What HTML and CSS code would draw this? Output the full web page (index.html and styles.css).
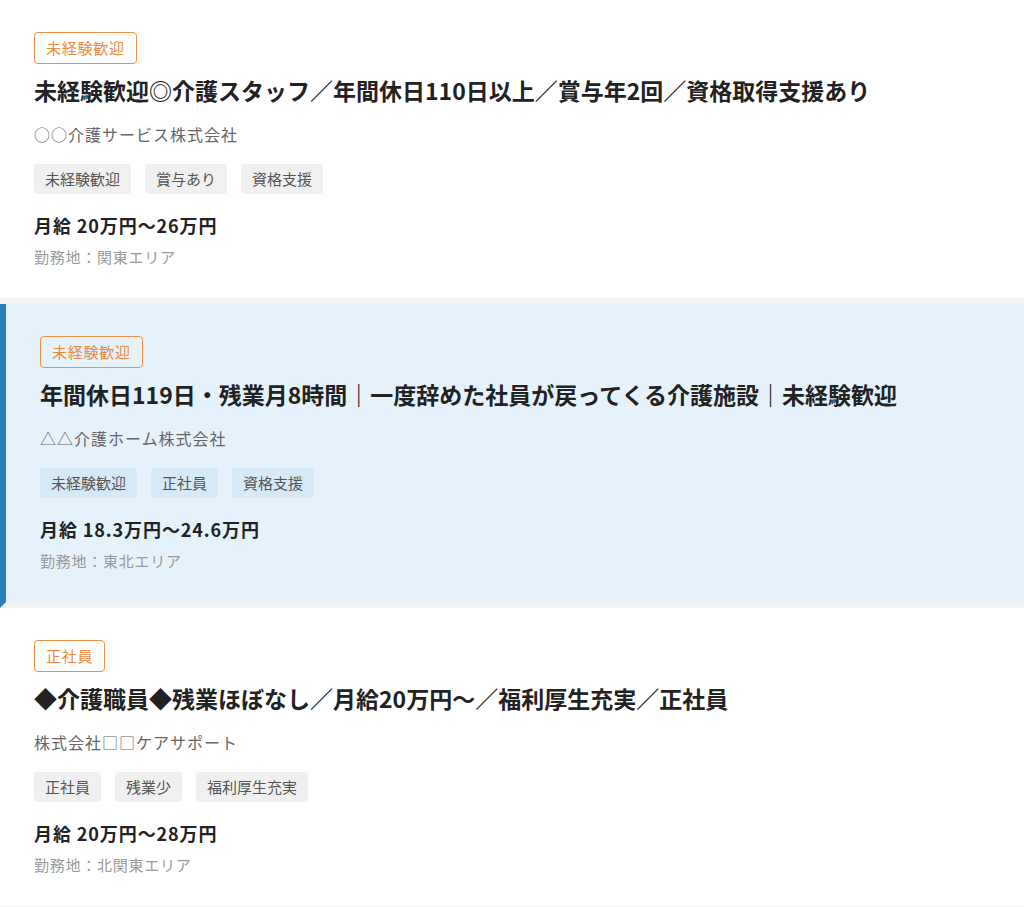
FILE: index.html
```html
<!DOCTYPE html>
<html lang="ja">
<head>
    <meta charset="UTF-8">
    <title>求人一覧</title>
    <link rel="stylesheet" href="styles.css">
</head>
<body>
    <div class="job-list">
        <div class="job-card">
            <span class="badge">未経験歓迎</span>
            <h2 class="job-title">未経験歓迎◎介護スタッフ／年間休日110日以上／賞与年2回／資格取得支援あり</h2>
            <p class="company">○○介護サービス株式会社</p>
            <ul class="tags">
                <li>未経験歓迎</li>
                <li>賞与あり</li>
                <li>資格支援</li>
            </ul>
            <p class="salary">月給 20万円〜26万円</p>
            <p class="location">勤務地：関東エリア</p>
        </div>

        <div class="job-card active">
            <span class="badge">未経験歓迎</span>
            <h2 class="job-title">年間休日119日・残業月8時間｜一度辞めた社員が戻ってくる介護施設｜未経験歓迎</h2>
            <p class="company">△△介護ホーム株式会社</p>
            <ul class="tags">
                <li>未経験歓迎</li>
                <li>正社員</li>
                <li>資格支援</li>
            </ul>
            <p class="salary">月給 18.3万円〜24.6万円</p>
            <p class="location">勤務地：東北エリア</p>
        </div>

        <div class="job-card">
            <span class="badge">正社員</span>
            <h2 class="job-title">◆介護職員◆残業ほぼなし／月給20万円〜／福利厚生充実／正社員</h2>
            <p class="company">株式会社□□ケアサポート</p>
            <ul class="tags">
                <li>正社員</li>
                <li>残業少</li>
                <li>福利厚生充実</li>
            </ul>
            <p class="salary">月給 20万円〜28万円</p>
            <p class="location">勤務地：北関東エリア</p>
        </div>
    </div>
</body>
</html>
```

FILE: styles.css
```css
body {
    margin: 0;
    background: #fff;
    font-family: "Noto Sans CJK JP", "Noto Sans", sans-serif;
    color: #222;
}

.job-card {
    background: #fff;
    padding: 32px 34px 31px;
    border-bottom: 6px solid #f3f3f3;
    display: flex;
    flex-direction: column;
    align-items: flex-start;
}

.job-card.active {
    background: #e6f2fb;
    border-left: 6px solid #2a7fba;
}

.badge {
    border: 1px solid #ef9246;
    border-radius: 4px;
    color: #ea8a3c;
    font-size: 15px;
    letter-spacing: 0.05em;
    line-height: 30px;
    padding: 0 11px;
}

.job-title {
    margin: 9px 0 0;
    font-size: 23px;
    font-weight: bold;
    line-height: 34px;
    color: #222;
}

.company {
    margin: 15px 0 0;
    font-size: 16px;
    line-height: 24px;
    color: #666;
    letter-spacing: 1px;
}

.tags {
    list-style: none;
    margin: 18px 0 0;
    padding: 0;
    display: flex;
    gap: 14px;
}

.tags li {
    background: #f0f0f0;
    border-radius: 4px;
    color: #555;
    font-size: 15px;
    line-height: 30px;
    padding: 0 11px;
}

.active .tags li {
    background: #d5e9f7;
}

.salary {
    margin: 18px 0 0;
    font-size: 18px;
    font-weight: bold;
    letter-spacing: 0.05em;
    line-height: 27px;
    color: #222;
}

.location {
    margin: 7px 0 0;
    font-size: 15px;
    letter-spacing: 0.05em;
    line-height: 21px;
    color: #999;
}
```
